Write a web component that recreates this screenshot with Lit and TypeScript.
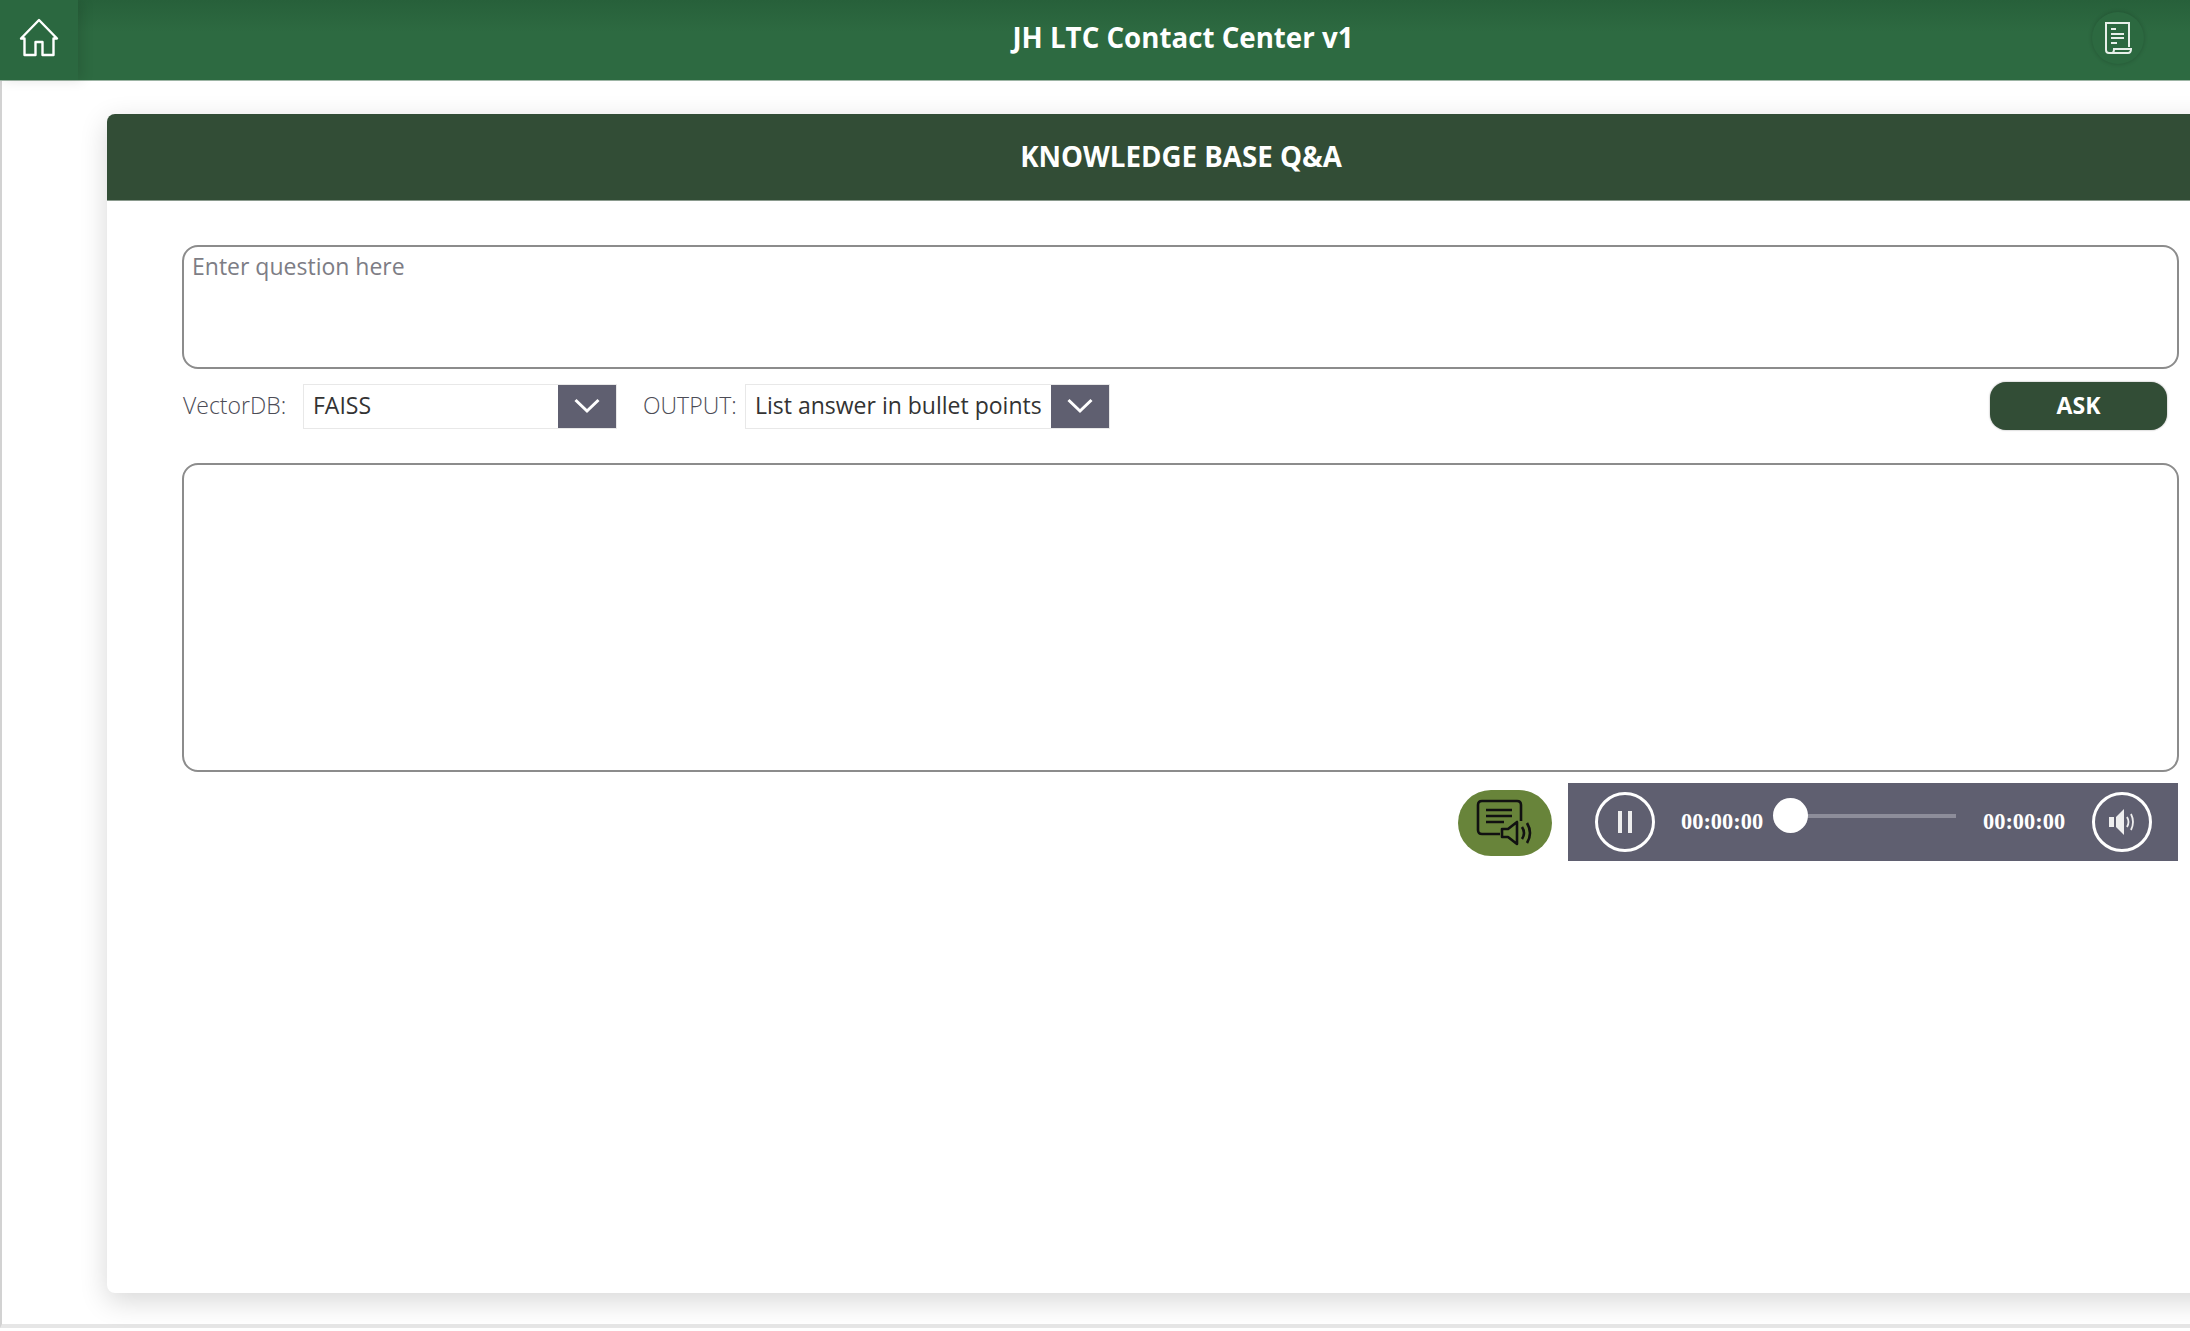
import { LitElement, html, css } from "lit";
import { customElement } from "lit/decorators.js";

const chevron = html`<svg width="28" height="18" viewBox="0 0 28 18" fill="none" stroke="#fff" stroke-width="3"><path d="M2.5 3 L14 14 L25.5 3"/></svg>`;

@customElement("app-root")
export class AppRoot extends LitElement {
  static styles = css`
    :host { display: block; width: 2190px; height: 1331px; overflow: hidden; background: #fff; font-family: "Open Sans", sans-serif; }
    * { box-sizing: border-box; }
    .page { height: 1328px; border-left: 2px solid #d2d2d2; border-bottom: 4px solid #e6e6e6; display: flex; flex-direction: column; }
    .top { height: 81px; margin-left: -2px; flex: none; display: flex; align-items: stretch; border-bottom: 1px solid #9db5a5;
      background: linear-gradient(180deg, #27603a 0%, #2d6a41 40%, #2d6a41 100%); color: #fff; }
    .home { width: 78px; flex: none; background: #2b6840; box-shadow: 4px 0 12px rgba(0,0,0,.12); display: flex; justify-content: center; padding-top: 18px; }
    .title { flex: 1; display: flex; justify-content: center; align-items: center; padding-left: 196px; padding-bottom: 6px; font-size: 27.7px; font-weight: 700; }
    .notes { width: 52px; height: 52px; margin: 12px 46px 0 0; border-radius: 50%; flex: none; box-shadow: 0 0 4px rgba(0,0,0,.2); background: #2c6940; display: flex; justify-content: center; align-items: center; }
    .main { padding: 33px 0 0 105px; flex: 1; min-height: 0; }
    .card { width: 2200px; height: 1179px; background: #fff; border-radius: 8px 0 0 8px; box-shadow: 0 8px 28px rgba(0,0,0,.16); }
    .band { height: 87px; background: #324d36; color: #fff; border-radius: 8px 0 0 0; border-bottom: 1px solid #8a9a8d; display: flex; align-items: center; justify-content: center; font-size: 27.7px; font-weight: 700; padding-right: 52px; padding-bottom: 2px; }
    .body { padding: 44px 0 0 75px; width: 2072px; }
    .box { border: 2px solid #8c8c8c; border-radius: 16px; background: #fff; width: 1997px; }
    .q { height: 124px; padding: 3px 8px; font-size: 23px; color: #7d7d85; }
    .a { height: 309px; }
    .row { display: flex; align-items: center; height: 48px; margin: 13px 0 33px; padding-left: 1px; font-size: 23px; }
    .lbl { font-weight: 300; color: #4c4c56; flex: none; padding-bottom: 2px; }
    .l1 { width: 120px; }
    .l2 { width: 102px; margin-left: 26px; }
    .sel { display: flex; height: 45px; border: 1px solid #e8e8e8; color: #333; background: #fff; flex: none; }
    .sel span { flex: 1; padding-left: 9px; line-height: 40px; white-space: nowrap; }
    .chev { width: 58px; flex: none; background: #5f5f70; display: flex; align-items: center; justify-content: center; }
    .s1 { width: 314px; }
    .s2 { width: 365px; }
    .ask { margin-left: auto; margin-right: 12px; width: 177px; height: 48px; padding-bottom: 2px; border-radius: 16px; background: #324d36; color: #fff; font-weight: 700; font-size: 23px; display: flex; align-items: center; justify-content: center; box-shadow: 0 0 2px rgba(0,0,0,.4); }
    .foot { display: flex; justify-content: flex-end; align-items: flex-start; margin-top: 11px; width: 1996px; }
    .tts { width: 94px; height: 66px; margin: 7px 16px 0 0; border-radius: 33px; background: #68843a; display: flex; align-items: center; justify-content: center; }
    .player { width: 610px; height: 78px; background: #5f5f70; display: flex; align-items: center; color: #fff; font: 700 22.4px "Liberation Serif", serif; padding-left: 27px; }
    .round { width: 60px; height: 60px; border: 3px solid #fff; border-radius: 50%; flex: none; display: flex; align-items: center; justify-content: center; }
    .t1 { margin-left: 26px; width: 109px; flex: none; }
    .track { width: 166px; flex: none; height: 4px; background: #8d8d9a; position: relative; margin-top: -12px; }
    .knob { position: absolute; left: 0; top: -16px; width: 35px; height: 35px; margin-left: -17px; border-radius: 50%; background: #fff; }
    .t2 { margin-left: 27px; width: 84px; flex: none; }
    .sp { margin-left: 25px; padding-left: 2px; }
  `;

  render() {
    return html`
      <div class="page">
        <div class="top">
          <div class="home">
            <svg width="42" height="40" viewBox="0 0 42 40" fill="none" stroke="#fff" stroke-width="2.4" stroke-linejoin="round">
              <path d="M2 20.5 L20 2 L38 20.5 L34.5 20.5 L34.5 37 L23.5 37 L23.5 24 L16.5 24 L16.5 37 L5.5 37 L5.5 20.5 Z" transform="translate(1 0)"/>
            </svg>
          </div>
          <div class="title">JH LTC Contact Center v1</div>
          <div class="notes">
            <svg width="30" height="34" viewBox="0 0 30 34" fill="none" stroke="#e8f0ea" stroke-width="2">
              <path d="M26 26 V2 H3 V29 Q3 32 6 32 H9"/>
              <path d="M9 32 Q11 32 11 28 H28 Q28 32 25 32 H9 Z"/>
              <path d="M8 8 H13 M8 13 H21 M8 17 H21 M8 22 H14" stroke-width="1.8"/>
            </svg>
          </div>
        </div>
        <div class="main">
          <div class="card">
            <div class="band">KNOWLEDGE BASE Q&amp;A</div>
            <div class="body">
              <div class="box q">Enter question here</div>
              <div class="row">
                <div class="lbl l1">VectorDB:</div>
                <div class="sel s1"><span>FAISS</span><div class="chev">${chevron}</div></div>
                <div class="lbl l2">OUTPUT:</div>
                <div class="sel s2"><span>List answer in bullet points</span><div class="chev">${chevron}</div></div>
                <div class="ask">ASK</div>
              </div>
              <div class="box a"></div>
              <div class="foot">
                <div class="tts">
                  <svg width="58" height="48" viewBox="0 0 58 48" fill="none" stroke="#111" stroke-width="2.6">
                    <path d="M24 35 H6 Q2 35 2 31 V6 Q2 2 6 2 H41 Q45 2 45 6 V22"/>
                    <path d="M10 11 H36 M10 17 H36 M10 23 H28"/>
                    <path d="M26 30 H32 L41 23 V45 L32 38 H26 Z" stroke-linejoin="round"/>
                    <path d="M46 28 Q50 34 46 40 M51 24 Q57 34 51 44"/>
                  </svg>
                </div>
                <div class="player">
                  <div class="round">
                    <svg width="16" height="24" viewBox="0 0 16 24" fill="#eee"><rect x="1" y="1" width="4" height="22"/><rect x="11" y="1" width="4" height="22"/></svg>
                  </div>
                  <div class="t1">00:00:00</div>
                  <div class="track"><div class="knob"></div></div>
                  <div class="t2">00:00:00</div>
                  <div class="round sp">
                    <svg width="30" height="28" viewBox="0 0 30 28" fill="none"><path d="M1 9 H6 V19 H1 Z M8 9 L16 1 V27 L8 19 Z" fill="#eee"/><path d="M19 9 Q22 14 19 19 M23 6 Q27 14 23 22" stroke="#eee" stroke-width="1.8"/></svg>
                  </div>
                </div>
              </div>
            </div>
          </div>
        </div>
      </div>
    `;
  }
}
